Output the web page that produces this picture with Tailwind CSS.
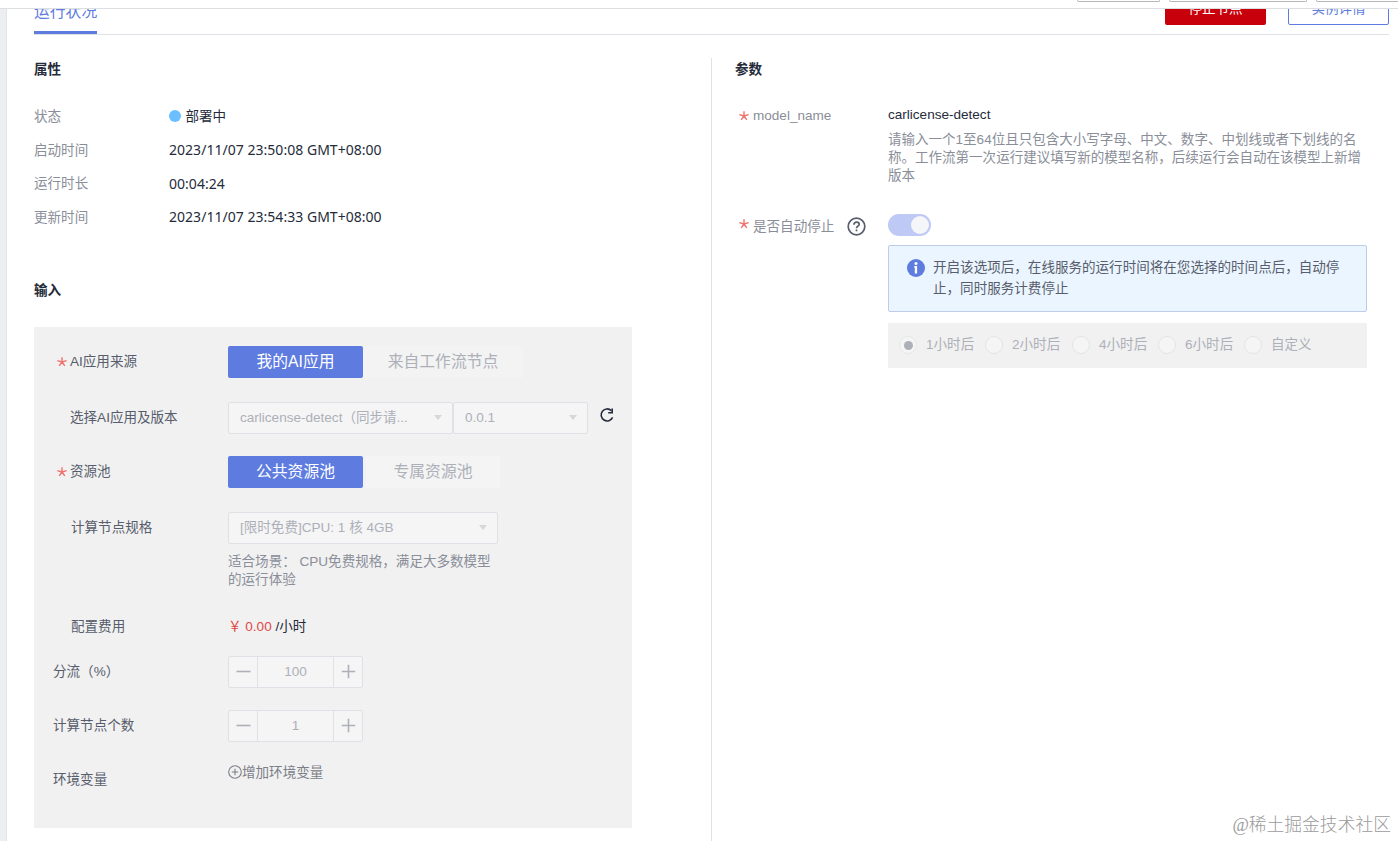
<!DOCTYPE html>
<html lang="zh-CN">
<head>
<meta charset="utf-8">
<title>运行状况</title>
<script src="https://cdn.jsdelivr.net/npm/@tailwindcss/browser@4"></script>
</head>
<body class="relative flex h-[841px] w-[1398px] flex-col overflow-hidden bg-white font-['Liberation_Sans','Noto_Sans_CJK_SC',sans-serif] text-[13.55px] leading-[18px] text-[#252b3a]">
  <header class="flex h-[9px] shrink-0 items-start gap-[9px] overflow-hidden border-b border-[#dcdfe1] pl-[1077px]">
    <div class="h-[2px] w-[83px] shrink-0 rounded-b-[2px] border-x border-b border-[#b4b8bb]"></div>
    <div class="h-[2px] w-[138px] shrink-0 rounded-b-[2px] border-x border-b border-[#b4b8bb]"></div>
    <div class="h-[2px] w-[90px] shrink-0 rounded-b-[2px] border-x border-b border-[#b4b8bb]"></div>
  </header>
  <div class="flex min-h-0 flex-1">
    <aside class="w-[7px] shrink-0 border-r border-[#e2e4e7] bg-[#edeef0]"></aside>
    <main class="flex min-w-0 flex-1 flex-col pl-[27px]">
      <nav class="flex h-[26px] w-[1355px] shrink-0 items-end justify-between overflow-hidden border-b border-[#dfe1e6]">
        <div class="flex h-[36px] w-[63px] shrink-0 flex-col justify-between whitespace-nowrap border-b-[3px] border-[#5e7ce0] pt-[1px] text-[15.8px] leading-[26px] text-[#5e7ce0]"><span>运行状况</span></div>
        <div class="flex gap-[22px] self-end pb-[9px]">
          <div class="flex h-8 w-[101px] items-center justify-center rounded-[2px] bg-[#c7000b] text-white">停止节点</div>
          <div class="flex h-8 w-[101px] items-center justify-center rounded-[2px] border border-[#5e7ce0] text-[#5e7ce0]">实例详情</div>
        </div>
      </nav>
      <div class="flex min-h-0 flex-1 pt-[23px]">
        <section class="w-[677px] shrink-0 pt-[3px]">
          <h2 class="text-[13.55px] font-bold leading-[18px]">属性</h2>
          <dl class="mt-[21px] grid grid-cols-[135px_1fr] auto-rows-[33.7px] items-center">
            <dt class="text-[#8a8e99]">状态</dt>
            <dd class="flex items-center gap-[5px]"><span class="mb-[2px] h-3 w-[11.5px] rounded-full bg-[#6cbfff]"></span>部署中</dd>
            <dt class="text-[#8a8e99]">启动时间</dt>
            <dd class="pb-[2px] font-['Noto_Sans',sans-serif] text-[14px] tracking-[0.03px]">2023/11/07 23:50:08 GMT+08:00</dd>
            <dt class="text-[#8a8e99]">运行时长</dt>
            <dd class="pb-[1px] font-['Noto_Sans',sans-serif] text-[14px] tracking-[0.03px]">00:04:24</dd>
            <dt class="text-[#8a8e99]">更新时间</dt>
            <dd class="pb-[1px] font-['Noto_Sans',sans-serif] text-[14px] tracking-[0.03px]">2023/11/07 23:54:33 GMT+08:00</dd>
          </dl>
          <h2 class="mt-[47px] text-[13.55px] font-bold leading-[18px]">输入</h2>

          <div class="mt-[27px] flex h-[501px] w-[598px] flex-col bg-[#f1f1f1] pl-[19px] pt-[19px] text-[#575d6c]">
            <div class="flex h-8 items-center">
              <div class="flex w-[175px] items-center pl-[3px]"><svg class="mr-[2px] h-3 w-3 text-[#f0716c]" viewBox="0 0 12 12" fill="none" stroke="currentColor" stroke-width="1.4"><path d="M6 1.2V6L10.6 4.6M6 6 8.8 9.9M6 6 3.2 9.9M6 6 1.4 4.6"/></svg>AI应用来源</div>
              <div class="flex h-8 w-[135px] items-center justify-center rounded-[2px] bg-[#5e7ce0] text-[15.8px] text-white">我的AI应用</div>
              <div class="flex h-8 w-[160px] items-center justify-center bg-[#f3f3f3] text-[15.8px] text-[#adb0b8]">来自工作流节点</div>
            </div>
            <div class="mt-6 flex h-8 items-center">
              <div class="w-[175px] pl-[17px]">选择AI应用及版本</div>
              <div class="flex h-8 w-[225px] items-center justify-between rounded-[2px] border border-[#dfe1e6] bg-[#f5f5f6] pl-[11px] pr-[10px] text-[#adb0b8]"><span class="whitespace-nowrap">carlicense-detect（同步请...</span><span class="border-x-[4.5px] border-t-[5px] border-x-transparent border-t-[#d5d7db]"></span></div>
              <div class="flex h-8 w-[135px] items-center justify-between rounded-[2px] border border-[#dfe1e6] bg-[#f5f5f6] pl-[11px] pr-[10px] text-[#adb0b8]"><span>0.0.1</span><span class="border-x-[4.5px] border-t-[5px] border-x-transparent border-t-[#d5d7db]"></span></div>
              <svg class="mb-[6px] ml-[11px] h-4 w-4 text-[#252b3a]" viewBox="0 0 16 16" fill="none" stroke="currentColor" stroke-width="1.6"><path d="M13.6 10.4A6 6 0 1 1 12.4 3.7"/><path d="M14 1.6V6.4H9.2V5H12.4V1.6Z" fill="currentColor" stroke="none"/></svg>
            </div>
            <div class="mt-[22px] flex h-8 items-center">
              <div class="flex w-[175px] items-center pl-[3px]"><svg class="mr-[2px] h-3 w-3 text-[#f0716c]" viewBox="0 0 12 12" fill="none" stroke="currentColor" stroke-width="1.4"><path d="M6 1.2V6L10.6 4.6M6 6 8.8 9.9M6 6 3.2 9.9M6 6 1.4 4.6"/></svg>资源池</div>
              <div class="flex h-8 w-[135px] items-center justify-center rounded-[2px] bg-[#5e7ce0] text-[15.8px] text-white">公共资源池</div>
              <div class="ml-[3px] flex h-8 w-[134px] items-center justify-center bg-[#f4f4f4] text-[15.8px] text-[#adb0b8]">专属资源池</div>
            </div>
            <div class="mt-6 flex">
              <div class="w-[175px] pl-[18px] leading-[32px]">计算节点规格</div>
              <div class="w-[270px]">
                <div class="flex h-8 items-center justify-between rounded-[2px] border border-[#dfe1e6] bg-[#f5f5f6] pl-[11px] pr-[10px] text-[#adb0b8]"><span>[限时免费]CPU: 1 核 4GB</span><span class="border-x-[4.5px] border-t-[5px] border-x-transparent border-t-[#d5d7db]"></span></div>
                <p class="mt-[9px] whitespace-nowrap text-[#8a8e99]">适合场景： CPU免费规格，满足大多数模型<br>的运行体验</p>
              </div>
            </div>
            <div class="mt-[29px] flex h-[18px] items-center">
              <div class="w-[175px] pl-[18px]">配置费用</div>
              <div class="text-[#252b3a]"><span class="text-[#e04848]">￥ 0.00</span> /小时</div>
            </div>
            <div class="mt-[20px] flex h-8 items-center">
              <div class="w-[175px]">分流（%）</div>
              <div class="flex h-8 w-[135px] items-stretch rounded-[2px] border border-[#dfe1e6] bg-[#f5f5f6] text-[#adb0b8]">
                <div class="flex w-[29px] items-center justify-center border-r border-[#dfe1e6]"><svg class="h-[15px] w-[15px]" viewBox="0 0 15 15" stroke="currentColor" stroke-width="1.6"><path d="M.5 7.5h14"/></svg></div>
                <div class="flex flex-1 items-center justify-center">100</div>
                <div class="flex w-[29px] items-center justify-center border-l border-[#dfe1e6]"><svg class="h-[15px] w-[15px]" viewBox="0 0 15 15" stroke="currentColor" stroke-width="1.6"><path d="M.8 7.5h13.4M7.5.8v13.4"/></svg></div>
              </div>
            </div>
            <div class="mt-[22px] flex h-8 items-center">
              <div class="w-[175px]">计算节点个数</div>
              <div class="flex h-8 w-[135px] items-stretch rounded-[2px] border border-[#dfe1e6] bg-[#f5f5f6] text-[#adb0b8]">
                <div class="flex w-[29px] items-center justify-center border-r border-[#dfe1e6]"><svg class="h-[15px] w-[15px]" viewBox="0 0 15 15" stroke="currentColor" stroke-width="1.6"><path d="M.5 7.5h14"/></svg></div>
                <div class="flex flex-1 items-center justify-center">1</div>
                <div class="flex w-[29px] items-center justify-center border-l border-[#dfe1e6]"><svg class="h-[15px] w-[15px]" viewBox="0 0 15 15" stroke="currentColor" stroke-width="1.6"><path d="M.8 7.5h13.4M7.5.8v13.4"/></svg></div>
              </div>
            </div>
            <div class="mt-[22px] flex items-start">
              <div class="w-[175px] pt-[7px]">环境变量</div>
              <div class="flex items-center text-[#7b7f89]"><svg class="mb-[2px] h-[14px] w-[14px]" viewBox="0 0 14 14" fill="none" stroke="currentColor" stroke-width="1.1"><circle cx="7" cy="7" r="6.3"/><path d="M3.8 7h6.4M7 3.8v6.4"/></svg>增加环境变量</div>
            </div>
          </div>
        </section>

        <section class="flex-1 border-l border-[#dfe1e6] pl-[23px] pt-[3px]">
          <h2 class="text-[13.55px] font-bold leading-[18px]">参数</h2>
          <div class="mt-[27px] flex">
            <div class="flex h-[20px] w-[153px] items-center pl-[3px] text-[#8a8e99]"><svg class="mr-[3px] h-3 w-3 text-[#f0716c]" viewBox="0 0 12 12" fill="none" stroke="currentColor" stroke-width="1.4"><path d="M6 1.2V6L10.6 4.6M6 6 8.8 9.9M6 6 3.2 9.9M6 6 1.4 4.6"/></svg>model_name</div>
            <div>
              <div>carlicense-detect</div>
              <p class="mt-[7px] whitespace-nowrap text-[13.52px] text-[#8a8e99]">请输入一个1至64位且只包含大小写字母、中文、数字、中划线或者下划线的名<br>称。工作流第一次运行建议填写新的模型名称，后续运行会自动在该模型上新增<br>版本</p>
            </div>
          </div>
          <div class="mt-[29px] flex">
            <div class="flex h-[24px] w-[153px] items-center pl-[3px] text-[#8a8e99]"><svg class="mb-[5px] mr-[3px] h-3 w-3 text-[#f0716c]" viewBox="0 0 12 12" fill="none" stroke="currentColor" stroke-width="1.4"><path d="M6 1.2V6L10.6 4.6M6 6 8.8 9.9M6 6 3.2 9.9M6 6 1.4 4.6"/></svg><span class="pt-[2px]">是否自动停止</span><svg class="ml-[13px] h-[19px] w-[19px] text-[#575d6c]" viewBox="0 0 19 19" fill="none" stroke="currentColor" stroke-width="1.7"><circle cx="9.5" cy="9.5" r="8.3"/><path d="M6.9 7.7C6.9 6.1 8 5.2 9.5 5.2S12.2 6.1 12.2 7.4C12.2 9.1 9.5 9.2 9.5 11.2"/><path d="M9.5 12.5v1.8"/></svg></div>
            <div class="w-[479px]">
              <div class="flex h-[22px] w-[43px] items-center justify-end rounded-full bg-[#bec9f5] pr-[2px]"><span class="h-[18px] w-[18px] rounded-full bg-[#f5f6fa]"></span></div>
              <div class="mt-[9px] flex h-[67px] rounded-[2px] border border-[#beccea] bg-[#ebf5ff] pl-[18px] pt-[11px] text-[#575d6c]">
                <svg class="mr-2 mt-[2px] h-[18px] w-[18px] shrink-0" viewBox="0 0 18 18"><circle cx="9" cy="9" r="9" fill="#5e7ce0"/><circle cx="9" cy="4.6" r="1.5" fill="#fff"/><path d="M7.2 7h2.9v7.4H7.8V8.4h-.6z" fill="#fff"/></svg>
                <p class="whitespace-nowrap leading-[21px]">开启该选项后，在线服务的运行时间将在您选择的时间点后，自动停<br>止，同时服务计费停止</p>
              </div>
              <div class="mt-[11px] flex h-[45px] items-center gap-[10px] bg-[#f1f1f1] pb-[1px] pl-[11px] text-[#adb0b8]">
                <div class="flex w-[76px] items-center gap-[9px] whitespace-nowrap"><span class="flex h-[18px] w-[18px] shrink-0 items-center justify-center rounded-full border border-[#e6e7ea] bg-[#f5f5f6]"><span class="h-[9px] w-[9px] rounded-full bg-[#adb0b8]"></span></span>1小时后</div>
                <div class="flex w-[77px] items-center gap-[9px] whitespace-nowrap"><span class="h-[18px] w-[18px] shrink-0 rounded-full border border-[#e3e4e7] bg-[#f5f5f6]"></span>2小时后</div>
                <div class="flex w-[76px] items-center gap-[9px] whitespace-nowrap"><span class="h-[18px] w-[18px] shrink-0 rounded-full border border-[#e3e4e7] bg-[#f5f5f6]"></span>4小时后</div>
                <div class="flex w-[76px] items-center gap-[9px] whitespace-nowrap"><span class="h-[18px] w-[18px] shrink-0 rounded-full border border-[#e3e4e7] bg-[#f5f5f6]"></span>6小时后</div>
                <div class="flex items-center gap-[9px] whitespace-nowrap"><span class="h-[18px] w-[18px] shrink-0 rounded-full border border-[#e3e4e7] bg-[#f5f5f6]"></span>自定义</div>
              </div>
            </div>
          </div>
        </section>
      </div>
    </main>
  </div>
  <div class="absolute bottom-[4px] right-[7px] whitespace-nowrap font-['Liberation_Serif','Noto_Sans_CJK_SC',serif] text-[17.8px] font-light leading-6 text-[#9b9b9b]">@稀土掘金技术社区</div>
</body>
</html>
